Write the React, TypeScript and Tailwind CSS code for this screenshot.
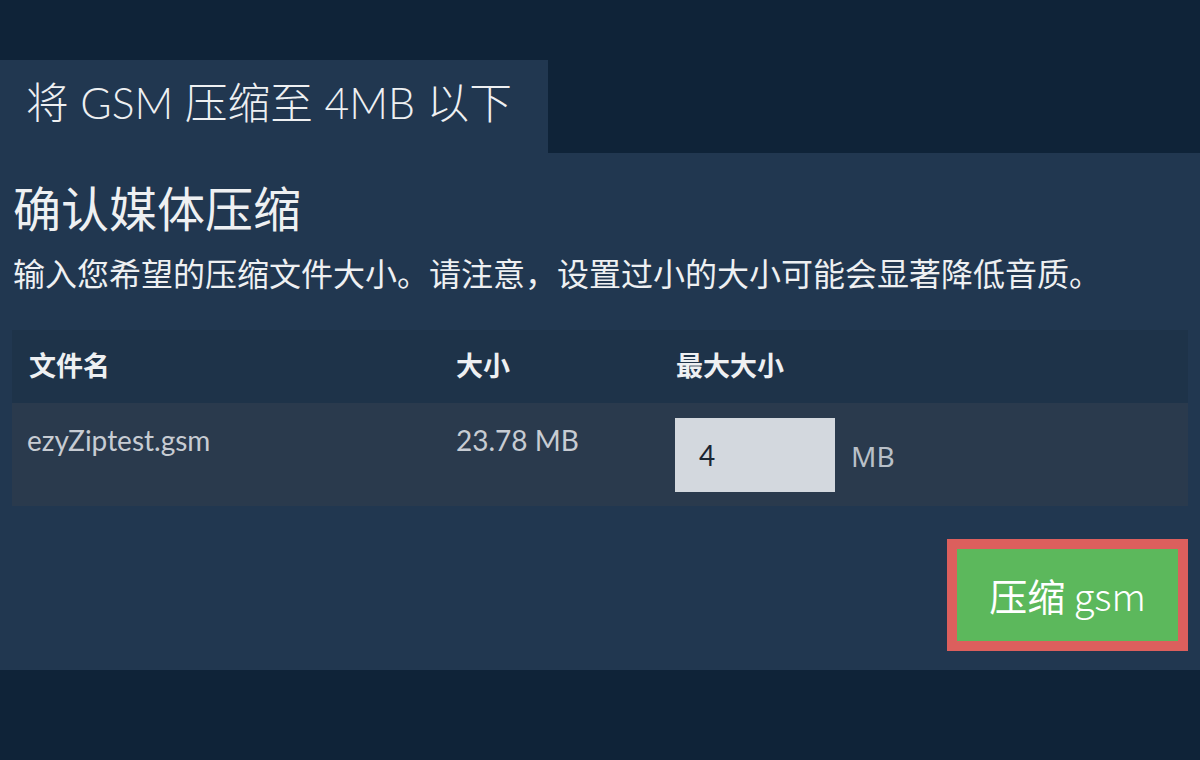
export default function App() {
  const latin = { fontFamily: 'Lato, "Noto Sans CJK SC", sans-serif' } as const;
  return (
    <div className="min-h-[760px] w-[1200px] bg-[#0f2338] pt-[60px] text-[#eef0f2]" style={latin}>
      <div className="flex h-[93px] w-[548px] items-center bg-[#213750] pl-[26px]">
        <h1 className="-mt-[6px] text-[42.7px] font-light leading-none">将 GSM 压缩至 4MB 以下</h1>
      </div>
      <div className="h-[517px] bg-[#213750] px-[12px] pt-[27px]">
        <h2 className="pl-[1px] text-[48px] font-normal leading-[58px]">确认媒体压缩</h2>
        <p className="mt-[16px] pl-[1px] text-[32px] leading-[40px]">
          输入您希望的压缩文件大小。请注意，设置过小的大小可能会显著降低音质。
        </p>
        <div className="mt-[36px] w-[1176px]">
          <div className="flex h-[73px] items-center bg-[#1e3349] text-[27px] font-bold">
            <div className="w-[444px] pl-[17px]">文件名</div>
            <div className="w-[220px]">大小</div>
            <div>最大大小</div>
          </div>
          <div className="flex h-[103px] bg-[#2a3a4d] text-[28px] text-[#c7ccd3]">
            <div className="w-[444px] pl-[15px] pt-[20px] leading-[34px]">ezyZiptest.gsm</div>
            <div className="w-[219px] pt-[20px] leading-[34px]">23.78 MB</div>
            <div className="flex items-center gap-[16px] self-start pt-[15px]">
              <div className="flex h-[74px] w-[160px] items-center bg-[#d3d8de] pl-[24px] text-[28px] text-[#1b2633]">4</div>
              <span className="pt-[2px] text-[28px] text-[#b9c0c8]" style={{ fontFamily: '"Noto Sans", sans-serif' }}>MB</span>
            </div>
          </div>
        </div>
        <div className="mt-[33px] flex justify-end">
          <button
            className="flex h-[112px] w-[241px] items-center justify-center border-[10px] border-[#dc5f5d] bg-[#5cb85c] text-[38px] text-white"
            style={{ fontFamily: '"Noto Sans CJK SC", "Noto Sans", sans-serif' }}
          >
            <span className="-mt-[2px]">压缩 <span className="font-light">gsm</span></span>
          </button>
        </div>
      </div>
    </div>
  );
}
